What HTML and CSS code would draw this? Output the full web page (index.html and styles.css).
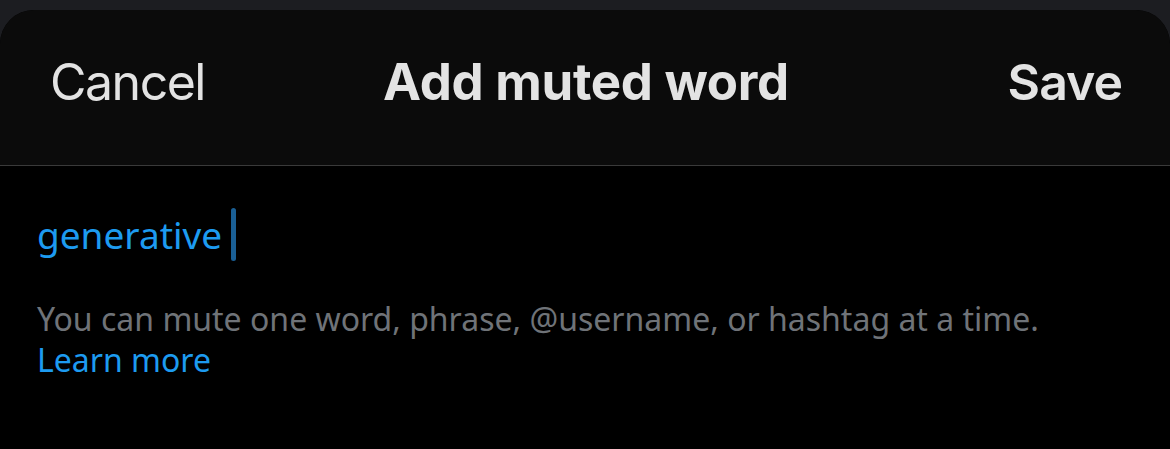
FILE: index.html
```html
<!DOCTYPE html>
<html lang="en">
<head>
  <meta charset="UTF-8">
  <meta name="viewport" content="width=device-width, initial-scale=1.0">
  <title>Add muted word</title>
  <link rel="stylesheet" href="styles.css">
</head>
<body>
  <!-- Sheet -->
  <div class="sheet">
    <div class="sheet-header">
      <span class="header-btn cancel">Cancel</span>
      <h1 class="sheet-title">Add muted word</h1>
      <span class="header-btn save">Save</span>
    </div>

    <!-- Body -->
    <div class="sheet-body">
      <div class="word-input">
        <span class="word-text">generative</span><span class="caret"></span>
      </div>
      <p class="hint">
        You can mute one word, phrase, @username, or hashtag at a time.<br>
        <a href="#" class="learn-more">Learn more</a>
      </p>
    </div>
  </div>
</body>
</html>
```

FILE: styles.css
```css
/* Reset */
body, html {
  margin: 0;
  padding: 0;
  background-color: #1c1d21;
  height: 100%;
  overflow: hidden;
}

/* Sheet */
.sheet {
  margin-top: 10px;
  height: calc(100% - 10px);
  background-color: #000;
  border-radius: 34px 34px 0 0;
  overflow: hidden;
}

.sheet-header {
  display: grid;
  grid-template-columns: 1fr auto 1fr;
  align-items: center;
  height: 156px;
  padding: 0 48px 12px 50px;
  box-sizing: border-box;
  background-color: #0b0b0b;
  border-bottom: 1px solid #3a3a3a;
  font-family: Inter, "Liberation Sans", sans-serif;
  color: #e3e3e3;
}

.header-btn {
  font-size: 50px;
}

.cancel {
  justify-self: start;
  letter-spacing: -1.5px;
}

.save {
  justify-self: end;
  font-weight: 600;
  letter-spacing: -1px;
}

.sheet-title {
  margin: 0;
  font-size: 51px;
  font-weight: 700;
  letter-spacing: -0.3px;
}

.sheet-body {
  padding: 38px 37px;
  font-family: "Noto Sans", "Open Sans", sans-serif;
}

.word-input {
  display: flex;
  align-items: center;
  height: 60px;
}

.word-text {
  font-size: 37px;
  color: #1d9bf0;
}

.caret {
  display: inline-block;
  width: 5px;
  height: 53px;
  margin-left: 9px;
  border-radius: 3px;
  background-color: #1a5f95;
}

.hint {
  margin: 34px 0 0;
  font-size: 32px;
  line-height: 41px;
  color: #6f7378;
}

.learn-more {
  color: #1d9bf0;
  text-decoration: none;
}
```
